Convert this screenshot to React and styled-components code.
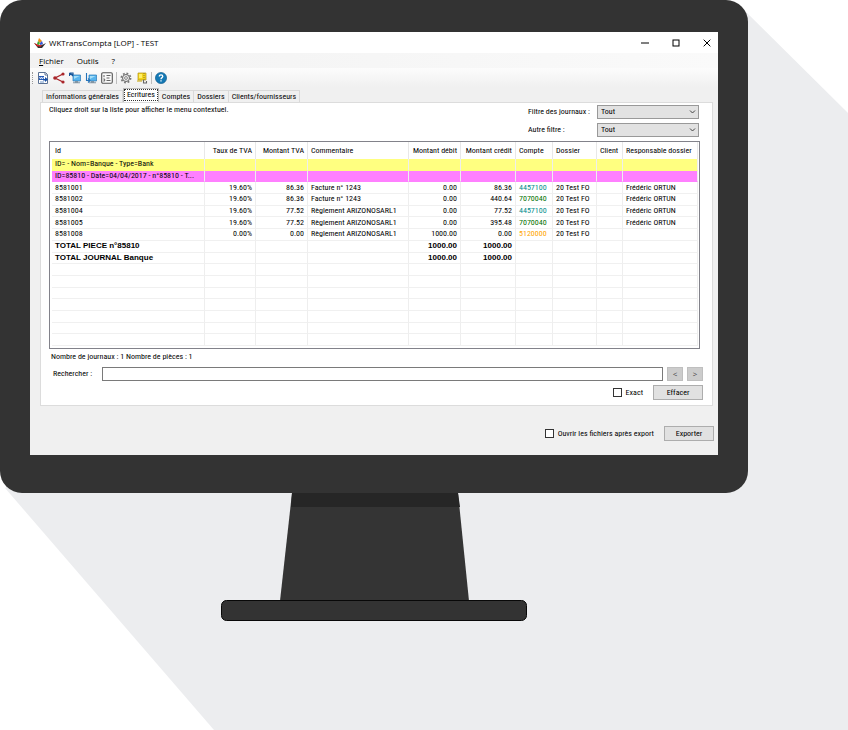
import React from "react";
import styled, { createGlobalStyle, css } from "styled-components";

const Global = createGlobalStyle`
  * { box-sizing: border-box; }
  body { margin: 0; background: #fff; }
`;

const uiFont = '"Roboto Condensed", "Liberation Sans", sans-serif';
const titleFont = '"Open Sans", "Noto Sans", sans-serif';

const Page = styled.main`
  position: relative;
  min-height: 730px;
  font: 8px/10px ${uiFont};
  color: #000;
`;

const LongShadow = styled.svg`
  position: absolute;
  inset: 0;
  width: 100%;
  height: 100%;
  z-index: -1;
`;

const Computer = styled.div`
  width: calc(100% - 100px);
  display: flex;
  flex-direction: column;
  align-items: center;
`;

const Bezel = styled.div`
  width: 100%;
  padding: 32px 30px 38px;
  background: #333;
  border-radius: 22px;
`;

const Stand = styled.svg`
  display: block;
  width: 308px;
  height: 128px;
`;

const Screen = styled.section`
  display: flex;
  flex-direction: column;
  background: #f0f0f0;
`;

const TitleBar = styled.header`
  display: flex;
  align-items: center;
  height: 21px;
  padding: 0 7px 0 4px;
  gap: 3px;
  background: #fff;
  font-family: ${titleFont};
`;

const WindowTitle = styled.h1`
  flex: 1;
  margin: 0;
  font-size: 8px;
  font-weight: 400;
`;

const WindowButtons = styled.div`
  display: flex;
  gap: 9px;
`;

const PlainButton = styled.button`
  display: grid;
  place-items: center;
  padding: 0;
  border: 0;
  background: none;
  color: inherit;
  font: inherit;
`;

const WindowButton = styled(PlainButton)`
  width: 22px;
  height: 21px;
  &:last-child { width: 8px; margin-left: 7px; }
`;

const MenuBar = styled.nav`
  display: flex;
  align-items: center;
  gap: 13px;
  height: 15px;
  padding: 0 9px;
  background: linear-gradient(90deg, #f2f2f2, #fafafa);
  font-family: ${titleFont};
`;

const Mnemonic = styled.u``;

const ToolBar = styled.div`
  display: flex;
  align-items: center;
  gap: 3px;
  height: 19px;
  padding-left: 2px;
  background: linear-gradient(#fcfcfc, #f0f0f0);
`;

const Grip = styled.span`
  width: 2px;
  height: 12px;
  border-left: 1px dotted #999;
`;

const ToolGroup = styled.div`
  display: flex;
  gap: 4px;
`;

const ToolButton = styled(PlainButton)`
  width: 12px;
  height: 12px;
`;

const Separator = styled.span`
  width: 1px;
  height: 12px;
  background: #bdbdbd;
`;

const TabList = styled.div`
  display: flex;
  align-items: flex-end;
  height: 15px;
  margin: 0 5px 0 10px;
  padding-left: 2px;
`;

const Tab = styled(PlainButton)`
  height: 12px;
  padding: 0 3px;
  border: 1px solid #d9d9d9;
  border-width: 1px 1px 0 0;
  &:first-child { border-left-width: 1px; }
  ${(p) =>
    p["aria-selected"] &&
    css`
      height: 14px;
      background: #fff;
      outline: 1px dotted #333;
      outline-offset: -2px;
      border-width: 1px 1px 0;
      border-color: #bbb;
      padding-bottom: 1px;
    `}
`;

const Panel = styled.div`
  margin: 0 5px 0 10px;
  padding: 2px 9px 5px 8px;
  background: #fff;
  border: 1px solid #dcdcdc;
`;

const PanelTop = styled.div`
  display: flex;
  justify-content: space-between;
  height: 36px;
  padding-right: 4px;
`;

const Hint = styled.p`
  margin: 0;
`;

const Filters = styled.div`
  display: grid;
  grid-template-columns: 65px 102px;
  grid-auto-rows: 14px;
  row-gap: 4px;
  column-gap: 4px;
  align-items: center;
`;

const SelectBox = styled.div`
  position: relative;
  height: 14px;
`;

const Select = styled.select`
  appearance: none;
  display: block;
  width: 100%;
  height: 100%;
  padding: 0 3px;
  border: 1px solid #999;
  border-radius: 0;
  background: #e2e2e2;
  color: #000;
  font: 8px/10px ${uiFont};
`;

const Chevron = styled.svg`
  position: absolute;
  right: 3px;
  top: 4px;
  width: 7px;
  height: 6px;
  pointer-events: none;
`;

const ListFrame = styled.div`
  height: 208px;
  margin-right: 3px;
  padding: 0 2px 2px;
  border: 1px solid #82828a;
`;

const Entries = styled.table`
  width: 100%;
  height: 100%;
  table-layout: fixed;
  border-collapse: separate;
  border-spacing: 0;
`;

const HeadCell = styled.th`
  width: ${(p) => p.$width}px;
  height: 17px;
  padding: 0 3px;
  border-right: 1px solid #e8e8e8;
  text-align: ${(p) => (p.$right ? "right" : "left")};
  font-weight: 400;
  white-space: nowrap;
`;

const rowTones = {
  journal: "background: #ffff80;",
  piece: "background: #ff80ff;",
  total: 'font: bold 8px/10px "Liberation Sans", Arial, sans-serif;',
};

const EntryRow = styled.tr`
  ${(p) => rowTones[p.$kind]}
`;

const Cell = styled.td`
  height: 11px;
  padding: 0 3px;
  border-right: 1px solid #eee;
  border-bottom: 1px solid ${(p) => (p.$filled ? "transparent" : "#f0f0f0")};
  text-align: ${(p) => (p.$right ? "right" : "left")};
  color: ${(p) => p.$color || "inherit"};
  white-space: nowrap;
  line-height: 10px;
`;

const Status = styled.p`
  margin: 3px 0 0 2px;
`;

const SearchRow = styled.div`
  display: flex;
  align-items: center;
  gap: 4px;
  margin: 5px 0 4px 4px;
`;

const SearchLabel = styled.label`
  width: 45px;
`;

const SearchInput = styled.input`
  flex: 1;
  min-width: 0;
  height: 14px;
  padding: 0 3px;
  border: 1px solid #7a7a7a;
  font: inherit;
`;

const StepButton = styled(PlainButton)`
  width: 16px;
  height: 14px;
  background: #ccc;
  border: 1px solid #bfbfbf;
  color: #444;
  font-family: ${titleFont};
`;

const ActionRow = styled.div`
  display: flex;
  align-items: center;
  justify-content: flex-end;
  gap: 10px;
`;

const Footer = styled(ActionRow)`
  padding: 20px 4px 14px;
`;

const PushButton = styled(PlainButton)`
  width: 50px;
  height: 15px;
  background: #e1e1e1;
  border: 1px solid #adadad;
`;

const CheckLabel = styled.label`
  display: flex;
  align-items: center;
  gap: 4px;
`;

const Check = styled.input`
  appearance: none;
  width: 9px;
  height: 9px;
  margin: 0;
  border: 1px solid #333;
  background: #fff;
  &:checked { background: #333; }
`;

const columns = [
  ["Id", 153],
  ["Taux de TVA", 51, true],
  ["Montant TVA", 52, true],
  ["Commentaire", 101],
  ["Montant débit", 52, true],
  ["Montant crédit", 55, true],
  ["Compte", 37],
  ["Dossier", 44],
  ["Client", 26],
  ["Responsable dossier", 75],
];

const rows = [
  { kind: "journal", cells: ["ID= - Nom=Banque - Type=Bank"] },
  { kind: "piece", cells: ["ID=85810 - Date=04/04/2017 - n°85810 - T..."] },
  { cells: ["8581001", "19.60%", "86.36", "Facture n° 1243", "0.00", "86.36", "4457100", "20 Test FO", "", "Frédéric ORTUN"] },
  { cells: ["8581002", "19.60%", "86.36", "Facture n° 1243", "0.00", "440.64", "7070040", "20 Test FO", "", "Frédéric ORTUN"] },
  { cells: ["8581004", "19.60%", "77.52", "Règlement ARIZONOSARL1", "0.00", "77.52", "4457100", "20 Test FO", "", "Frédéric ORTUN"] },
  { cells: ["8581005", "19.60%", "77.52", "Règlement ARIZONOSARL1", "0.00", "395.48", "7070040", "20 Test FO", "", "Frédéric ORTUN"] },
  { cells: ["8581008", "0.00%", "0.00", "Règlement ARIZONOSARL1", "1000.00", "0.00", "5120000", "20 Test FO"] },
  { kind: "total", cells: ["TOTAL PIECE n°85810", "", "", "", "1000.00", "1000.00"] },
  { kind: "total", cells: ["TOTAL JOURNAL Banque", "", "", "", "1000.00", "1000.00"] },
  ...Array.from({ length: 7 }, () => ({ cells: [] })),
];

const accountColors = { 4457100: "#008b8b", 7070040: "#007000", 5120000: "#ffa500" };

const Icon = ({ children, size = 12 }) => (
  <svg width={size} height={size} viewBox="0 0 12 12" fill="none" aria-hidden="true">
    {children}
  </svg>
);

const AppIcon = () => (
  <Icon>
    <path d="M0 6Q3 8 6 8Q9 8 12 6L8 11H4Z" fill="#333" />
    <path d="M0 6L5 8 4 10Z" fill="#e02020" />
    <path d="M5 1L8 4 6 6 4 4Z" fill="#f09018" />
    <path d="M4 4L6 6 5 8 3 7Z" fill="#38a838" />
    <path d="M8 4L9 7 6 8 6 6Z" fill="#3858d8" />
    <path d="M4 8H8L6 10Z" fill="#e02828" />
  </Icon>
);

const DocumentIcon = () => (
  <Icon>
    <path d="M1.5 .5H8.5L10.5 2.5V11.5H1.5Z" fill="#fff" stroke="#5b7193" />
    <path d="M8 1V3H10" stroke="#5b7193" />
    <path d="M2 4H7V8H2Z" fill="#245ab8" />
    <path d="M2.5 5L3.5 7 4.5 5 5.5 7 6.5 5" stroke="#fff" strokeWidth=".8" />
    <path d="M6 7H8V5L11 7.5 8 10V8.5H6Z" fill="#174fa5" />
    <path d="M3 10H7" stroke="#6d94c8" />
  </Icon>
);

const ShareIcon = () => (
  <Icon>
    <path d="M10 2L2 6L10 10" stroke="#a9252a" strokeWidth="1.3" />
    <circle cx="10" cy="2" r="1.6" fill="#a9252a" />
    <circle cx="2" cy="6" r="1.8" fill="#a9252a" />
    <circle cx="10" cy="10" r="1.6" fill="#a9252a" />
  </Icon>
);

const ScreenShape = () => (
  <>
    <path d="M4 3H11.5V9H4Z" fill="#58b4ed" stroke="#2879b8" strokeWidth=".7" />
    <path d="M5 4H10.5L5 7Z" fill="#a4def8" />
    <path d="M6 9H9V10.3H11V11.3H4V10.3H6Z" fill="#8295a4" />
  </>
);

const ImportIcon = () => (
  <Icon>
    <ScreenShape />
    <path d="M.5 1H4V3M.5 1V4M1 1L4 4" stroke="#16569a" strokeWidth="1.2" />
  </Icon>
);

const ExportIcon = () => (
  <Icon>
    <ScreenShape />
    <path d="M1.5 1V8.5H5M3 6.5L5 8.5 3 10.5" stroke="#2473b9" strokeWidth="1.1" />
  </Icon>
);

const ListIcon = () => (
  <Icon>
    <rect x=".7" y=".7" width="10.6" height="10.6" rx="1.2" fill="#fafafa" stroke="#555" strokeWidth="1.1" />
    <path d="M3 3V5.2M2.3 7H3.7V9H2.3M5.5 3.5H9.5M5.5 6H8.5M5.5 8.5H9.5" stroke="#555" strokeWidth=".9" />
  </Icon>
);

const GearIcon = () => (
  <Icon>
    <circle cx="6" cy="6" r="4.6" stroke="#777" strokeWidth="1.7" strokeDasharray="1.8 1.8" />
    <circle cx="6" cy="6" r="3.5" fill="#eee" stroke="#666" />
    <circle cx="6" cy="6" r="1.4" fill="#fff" stroke="#777" strokeWidth=".9" />
  </Icon>
);

const ArchiveIcon = () => (
  <Icon>
    <path d="M2 1H10V8H2Z" fill="#f4d51f" stroke="#b39213" strokeWidth=".7" />
    <path d="M3 2H6V6H3Z" fill="#fff067" />
    <path d="M8 1V9" stroke="#8b7825" strokeDasharray="1 1" />
    <path d="M1 9H6" stroke="#c9ab1c" strokeWidth="1.1" />
    <path d="M7.5 8V11H10.5V9" stroke="#666" strokeWidth="1.1" />
  </Icon>
);

const HelpIcon = () => (
  <Icon>
    <circle cx="6" cy="6" r="5.6" fill="#1479b5" stroke="#0a5888" strokeWidth=".6" />
    <path d="M4.3 4.5C4.3 2.2 7.8 2.4 7.8 4.4C7.8 5.6 6 5.7 6 7.2M6 8.3V9.6" stroke="#fff" strokeWidth="1.3" />
  </Icon>
);

const tools = [
  [["Document", DocumentIcon], ["Partager", ShareIcon], ["Importer", ImportIcon], ["Envoyer", ExportIcon], ["Liste", ListIcon]],
  [["Options", GearIcon], ["Archiver", ArchiveIcon]],
  [["Aide", HelpIcon]],
];

const tabs = ["Informations générales", "Ecritures", "Comptes", "Dossiers", "Clients/fournisseurs"];

function Filter({ id, label }) {
  return (
    <>
      <label htmlFor={id}>{label}</label>
      <SelectBox>
        <Select id={id}>
          <option>Tout</option>
        </Select>
        <Chevron viewBox="0 0 7 6" fill="none">
          <path d="M1 1.5L3.5 4L6 1.5" stroke="#444" />
        </Chevron>
      </SelectBox>
    </>
  );
}

function EntriesTable() {
  return (
    <ListFrame>
      <Entries>
        <thead>
          <tr>
            {columns.map(([name, width, right]) => (
              <HeadCell key={name} $width={width} $right={right}>{name}</HeadCell>
            ))}
          </tr>
        </thead>
        <tbody>
          {rows.map(({ kind, cells }, i) => (
            <EntryRow key={i} $kind={kind}>
              {columns.map(([name, , right], c) => (
                <Cell
                  key={name}
                  $right={right}
                  $filled={kind === "journal" || kind === "piece"}
                  $color={name === "Compte" ? accountColors[cells[c]] : undefined}
                >
                  {cells[c]}
                </Cell>
              ))}
            </EntryRow>
          ))}
        </tbody>
      </Entries>
    </ListFrame>
  );
}

export default function App() {
  return (
    <Page>
      <Global />
      <LongShadow viewBox="0 0 848 730" preserveAspectRatio="none" aria-hidden="true">
        <path d="M741 7L848 113V730H214L5 488Z" fill="#ecedef" />
      </LongShadow>
      <Computer>
        <Bezel>
          <Screen>
            <TitleBar>
              <AppIcon />
              <WindowTitle>WKTransCompta [LOP] - TEST</WindowTitle>
              <WindowButtons>
                <WindowButton aria-label="Réduire"><Icon size={8}><path d="M0 6H12" stroke="#000" strokeWidth="1.5" /></Icon></WindowButton>
                <WindowButton aria-label="Agrandir"><Icon size={8}><rect x="1.5" y="1.5" width="9" height="9" stroke="#000" strokeWidth="1.5" /></Icon></WindowButton>
                <WindowButton aria-label="Fermer"><Icon size={8}><path d="M1 1L11 11M11 1L1 11" stroke="#000" strokeWidth="1.5" /></Icon></WindowButton>
              </WindowButtons>
            </TitleBar>
            <MenuBar>
              <PlainButton><span><Mnemonic>F</Mnemonic>ichier</span></PlainButton>
              <PlainButton>Outils</PlainButton>
              <PlainButton>?</PlainButton>
            </MenuBar>
            <ToolBar>
              <Grip />
              {tools.map((group, i) => (
                <React.Fragment key={i}>
                  {i > 0 && <Separator />}
                  <ToolGroup>
                    {group.map(([name, Glyph]) => (
                      <ToolButton key={name} aria-label={name}><Glyph /></ToolButton>
                    ))}
                  </ToolGroup>
                </React.Fragment>
              ))}
            </ToolBar>
            <TabList role="tablist">
              {tabs.map((name, i) => (
                <Tab key={name} role="tab" aria-selected={i === 1}>{name}</Tab>
              ))}
            </TabList>
            <Panel role="tabpanel">
              <PanelTop>
                <Hint>Cliquez droit sur la liste pour afficher le menu contextuel.</Hint>
                <Filters>
                  <Filter id="journaux" label="Filtre des journaux :" />
                  <Filter id="autre" label="Autre filtre :" />
                </Filters>
              </PanelTop>
              <EntriesTable />
              <Status>Nombre de journaux : 1 Nombre de pièces : 1</Status>
              <SearchRow>
                <SearchLabel htmlFor="recherche">Rechercher :</SearchLabel>
                <SearchInput id="recherche" />
                <StepButton>&lt;</StepButton>
                <StepButton>&gt;</StepButton>
              </SearchRow>
              <ActionRow>
                <CheckLabel><Check type="checkbox" />Exact</CheckLabel>
                <PushButton>Effacer</PushButton>
              </ActionRow>
            </Panel>
            <Footer>
              <CheckLabel><Check type="checkbox" />Ouvrir les fichiers après export</CheckLabel>
              <PushButton>Exporter</PushButton>
            </Footer>
          </Screen>
        </Bezel>
        <Stand viewBox="0 0 308 128" aria-hidden="true">
          <path d="M72 0H238L249 108H60Z" fill="#343434" />
          <path d="M72 0H238L240 14H71Z" fill="#262626" />
          <rect x="1.5" y="107.5" width="305" height="20" rx="5" fill="#333" stroke="#080808" />
        </Stand>
      </Computer>
    </Page>
  );
}
